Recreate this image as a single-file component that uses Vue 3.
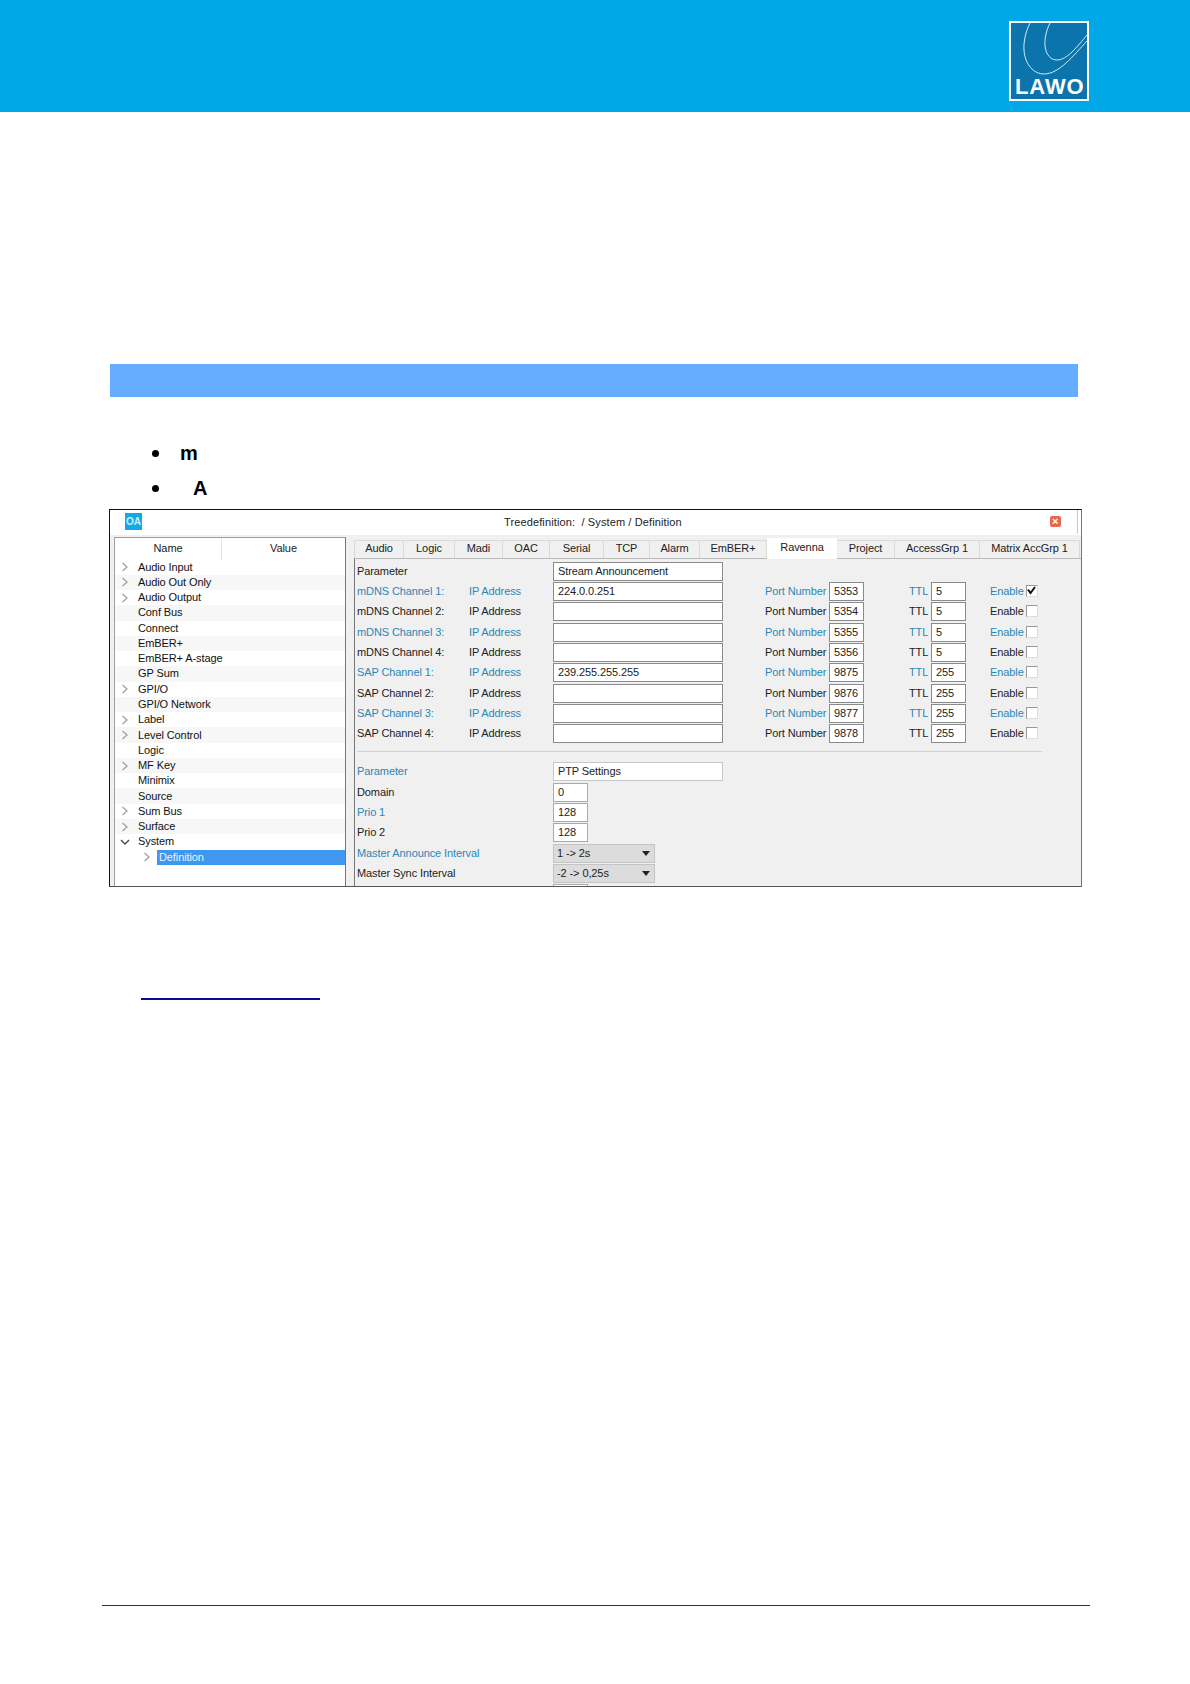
<script setup>
const tree = [
  { n: 'Audio Input', c: 1 }, { n: 'Audio Out Only', c: 1 }, { n: 'Audio Output', c: 1 },
  { n: 'Conf Bus' }, { n: 'Connect' }, { n: 'EmBER+' }, { n: 'EmBER+ A-stage' }, { n: 'GP Sum' },
  { n: 'GPI/O', c: 1 }, { n: 'GPI/O Network' }, { n: 'Label', c: 1 }, { n: 'Level Control', c: 1 },
  { n: 'Logic' }, { n: 'MF Key', c: 1 }, { n: 'Minimix' }, { n: 'Source' },
  { n: 'Sum Bus', c: 1 }, { n: 'Surface', c: 1 }, { n: 'System', o: 1 },
]
const tabs = ['Audio', 'Logic', 'Madi', 'OAC', 'Serial', 'TCP', 'Alarm', 'EmBER+', 'Ravenna', 'Project', 'AccessGrp 1', 'Matrix AccGrp 1']
const channels = [
  { l: 'mDNS Channel 1:', ip: '224.0.0.251', p: '5353', t: '5', b: 1, on: 1 },
  { l: 'mDNS Channel 2:', ip: '', p: '5354', t: '5' },
  { l: 'mDNS Channel 3:', ip: '', p: '5355', t: '5', b: 1 },
  { l: 'mDNS Channel 4:', ip: '', p: '5356', t: '5' },
  { l: 'SAP Channel 1:', ip: '239.255.255.255', p: '9875', t: '255', b: 1 },
  { l: 'SAP Channel 2:', ip: '', p: '9876', t: '255' },
  { l: 'SAP Channel 3:', ip: '', p: '9877', t: '255', b: 1 },
  { l: 'SAP Channel 4:', ip: '', p: '9878', t: '255' },
]
const ptp = [
  { l: 'Domain', v: '0' }, { l: 'Prio 1', v: '128', b: 1 }, { l: 'Prio 2', v: '128' },
]
</script>

<template>
  <div class="page">
    <header class="top">
      <div class="logo">
        <svg class="curves" viewBox="0 0 76 76" width="76" height="76" fill="none" stroke="#d5ecf7" stroke-width="1">
          <path d="M19 0C14 10 12.5 20 13 27C14 42 23 51 33 51C48 51 62 33 76 18" />
          <path d="M39 0C35 8 33.5 16 34 23C35 32 40 37 46 37C56 37 66 24 76 12" />
        </svg>
        <span class="logo-text">LAWO</span>
      </div>
    </header>

    <div class="bar"></div>

    <ul class="bullets">
      <li><i class="dot"></i><b>m</b></li>
      <li class="indent"><i class="dot"></i><b>A</b></li>
    </ul>

    <section class="win">
      <div class="titlebar">
        <span class="oa">OA</span>
        <span class="title">Treedefinition:&nbsp; / System / Definition</span>
        <span class="close">×</span>
        <span class="edge"></span>
      </div>
      <div class="body">
        <aside class="tree">
          <div class="thead"><span>Name</span><span>Value</span></div>
          <div v-for="(r, i) in tree" :key="r.n" class="trow" :class="{ alt: i % 2 === 1 }">
            <svg v-if="r.c" class="chev" viewBox="0 0 8 10" width="8" height="10"><path d="M1.5 1l4.5 4-4.5 4" fill="none" stroke="#a0a0a0" stroke-width="1.3" /></svg>
            <svg v-else-if="r.o" class="chev" viewBox="0 0 10 8" width="10" height="8"><path d="M1 2l4 4 4-4" fill="none" stroke="#444" stroke-width="1.3" /></svg>
            <span v-else class="chev"></span>
            <span class="tname">{{ r.n }}</span>
          </div>
          <div class="trow sub">
            <svg class="chev" viewBox="0 0 8 10" width="8" height="10"><path d="M1.5 1l4.5 4-4.5 4" fill="none" stroke="#a0a0a0" stroke-width="1.3" /></svg>
            <span class="sel">Definition</span>
          </div>
        </aside>

        <div class="main">
          <nav class="tabs">
            <span v-for="t in tabs" :key="t" class="tab" :class="{ active: t === 'Ravenna' }">{{ t }}</span>
          </nav>
          <div class="panel">
            <div class="grid">
              <span class="lab">Parameter</span>
              <span></span>
              <span class="in">Stream Announcement</span>
              <span class="rest"></span>
              <template v-for="c in channels" :key="c.l">
                <span class="lab" :class="{ blue: c.b }">{{ c.l }}</span>
                <span class="lab" :class="{ blue: c.b }">IP Address</span>
                <span class="in">{{ c.ip }}</span>
                <span></span>
                <span class="lab" :class="{ blue: c.b }">Port Number</span>
                <span class="in">{{ c.p }}</span>
                <span></span>
                <span class="lab" :class="{ blue: c.b }">TTL</span>
                <span class="in">{{ c.t }}</span>
                <span></span>
                <span class="lab" :class="{ blue: c.b }">Enable</span>
                <span class="cb">
                  <svg v-if="c.on" viewBox="0 0 12 12" width="12" height="12"><path d="M2 4.5l2.5 3.5L9 2" fill="none" stroke="#111" stroke-width="2" /></svg>
                </span>
              </template>
            </div>
            <div class="sep"></div>
            <div class="ptp">
              <span class="lab blue">Parameter</span>
              <span class="in wide">PTP Settings</span>
              <template v-for="p in ptp" :key="p.l">
                <span class="lab" :class="{ blue: p.b }">{{ p.l }}</span>
                <span class="in short">{{ p.v }}</span>
              </template>
              <span class="lab blue">Master Announce Interval</span>
              <span class="drop">1 -&gt; 2s<i class="arrow"></i></span>
              <span class="lab">Master Sync Interval</span>
              <span class="drop">-2 -&gt; 0,25s<i class="arrow"></i></span>
              <span></span>
              <span class="in short"></span>
            </div>
          </div>
        </div>
      </div>
    </section>

    <div class="link"></div>
    <div class="foot"></div>
  </div>
</template>

<style>
html, body { margin: 0; background: #fff; }
</style>

<style scoped>
.page { width: 1190px; height: 1684px; overflow: hidden; position: relative; background: #fff; font-family: "Liberation Sans", Arial, sans-serif; }
.top { height: 112px; background: #00a8e8; display: flex; justify-content: flex-end; align-items: flex-start; padding: 21px 101px 0 0; box-sizing: border-box; }
.logo { width: 80px; height: 80px; box-sizing: border-box; border: 2px solid #fff; background: #0b74ad; position: relative; overflow: hidden; }
.curves { position: absolute; left: 0; top: 0; }
.logo-text { position: absolute; left: 4px; right: 0; bottom: 1px; font: bold 22px/22px "Liberation Sans", Arial, sans-serif; letter-spacing: 0.9px; color: #fff; }
.bar { width: 968px; height: 33px; margin: 252px 0 0 110px; background: #66adff; }
.bullets { list-style: none; margin: 39px 0 0; padding: 0; height: 73px; }
.bullets li { height: 35px; display: flex; align-items: center; padding-left: 152px; font-size: 20px; color: #000; }
.dot { width: 7px; height: 7px; border-radius: 50%; background: #000; margin-right: 21px; }
.indent .dot { margin-right: 34px; }
.win { margin-left: 109px; width: 973px; height: 378px; box-sizing: border-box; border: 1px solid #111; border-bottom-color: #555; border-right-color: #777; background: #f0f0f0; font-size: 11px; color: #222; display: flex; flex-direction: column; overflow: hidden; letter-spacing: -0.1px; }
.titlebar { height: 25px; background: #fff; display: flex; align-items: center; position: relative; flex: none; padding: 0 0 2px 15px; box-sizing: border-box; }
.oa { width: 17px; height: 17px; background: #10abe6; color: #cfeefb; font-weight: bold; font-size: 10px; line-height: 17px; text-align: center; letter-spacing: 0; }
.title { margin-left: 362px; color: #222; white-space: pre; letter-spacing: 0.12px; }
.close { margin-left: 368px; width: 11px; height: 11px; border-radius: 2px; background: #e8694a; color: #fff; font: bold 11px/11px "Liberation Sans", sans-serif; text-align: center; letter-spacing: 0; }
.edge { position: absolute; right: 3px; top: 0; height: 24px; width: 1px; background: #c8c8c8; }
.body { flex: 1; display: flex; min-height: 0; padding: 2px 0 0 4px; }
.tree { width: 232px; box-sizing: border-box; background: #fff; border: 1px solid #a0a0a0; border-bottom: 0; border-right: 1px solid #777; flex: none; height: 352px; overflow: hidden; }
.thead { display: grid; grid-template-columns: 106px 1fr; height: 21.5px; line-height: 20px; text-align: center; }
.thead span + span { border-left: 1px solid #e4e4e4; }
.trow { height: 15.28px; line-height: 15px; display: flex; align-items: center; padding-left: 5px; color: #111; white-space: nowrap; }
.trow.alt { background: #f7f7f7; }
.chev { width: 10px; flex: none; display: block; }
.tname { margin-left: 8px; }
.sub { padding-left: 27px; }
.sel { margin-left: 5px; flex: 1; align-self: stretch; background: #3f97ef; color: #e8f4ff; padding-left: 2px; }
.main { width: 727px; margin-left: 8px; flex: none; display: flex; flex-direction: column; min-height: 0; }
.tabs { display: grid; grid-template-columns: 50px 51px 48px 47px 54px 46px 50px 67px 70px 58px 85px 100px; height: 21px; padding-top: 3px; box-sizing: border-box; flex: none; }
.tab { background: #f0f0f0; border: 1px solid #dadada; border-bottom: 0; border-left: 0; text-align: center; line-height: 15px; height: 18px; color: #222; }
.tab:first-child { border-left: 1px solid #dadada; }
.tab.active { background: #fff; margin-top: -2px; height: 21px; line-height: 18px; border: 0; position: relative; }
.panel { flex: 1; border-left: 1px solid #777; border-top: 1px solid #bbb; padding: 2.5px 0 0 2px; overflow: hidden; min-height: 0; }
.grid { display: grid; grid-template-columns: 112px 84px 170px 42px 64px 35px 45px 22px 35px 24px 36px 13px; grid-auto-rows: 19px; row-gap: 1.35px; }
.rest { grid-column: 4 / -1; }
.lab { line-height: 19px; white-space: nowrap; color: #222; }
.lab.blue { color: #2b87b5; }
.in { box-sizing: border-box; height: 19px; background: #fff; border: 1px solid #8a8a8a; padding-left: 4px; line-height: 17px; color: #222; white-space: nowrap; overflow: hidden; }
.cb { box-sizing: border-box; width: 12px; height: 12px; margin-top: 3px; background: #fff; border: 1px solid #999; border-right-color: #ddd; border-bottom-color: #ddd; display: block; }
.cb svg { display: block; margin: -1px; }
.sep { height: 1px; background: #d2d2d2; margin: 7.5px 0 10.5px 0; width: 685px; }
.ptp { display: grid; grid-template-columns: 196px 170px; grid-auto-rows: 19px; row-gap: 1.35px; }
.in.wide { border-color: #c8c8c8; }
.in.short { width: 35px; border-color: #aaa; }
.drop { box-sizing: border-box; width: 102px; height: 19px; background: #dcdcdc; border: 1px solid #c4c4c4; padding-left: 3px; line-height: 17px; position: relative; color: #222; }
.arrow { position: absolute; right: 4px; top: 6px; width: 0; height: 0; border-left: 4px solid transparent; border-right: 4px solid transparent; border-top: 5px solid #222; }
.link { width: 179px; height: 2px; background: #0a0a96; margin: 111px 0 0 141px; }
.foot { position: absolute; left: 102px; top: 1605px; width: 988px; height: 1px; background: #333; }
</style>
